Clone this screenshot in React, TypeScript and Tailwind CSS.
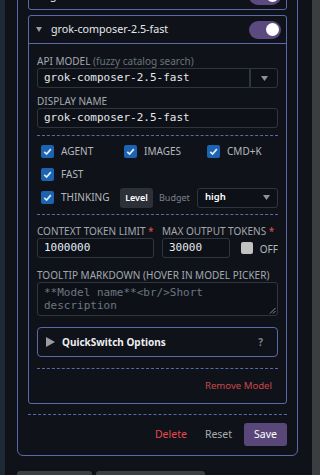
import React from 'react';

const Check: React.FC<{ on?: boolean }> = ({ on = true }) =>
  on ? (
    <span className="w-[13px] h-[13px] rounded-[2px] bg-[#1c63b1] flex items-center justify-center shrink-0">
      <svg width="9" height="9" viewBox="0 0 10 10">
        <path d="M1.4 5.3 L4 7.8 L8.7 2.3" fill="none" stroke="#e3ecf6" strokeWidth="1.9" />
      </svg>
    </span>
  ) : (
    <span className="w-[12px] h-[12px] rounded-[2px] bg-[#c2c2c2] shrink-0" />
  );

const Toggle = () => (
  <div className="w-[32px] h-[18px] rounded-full bg-[#5b4a80] flex items-center justify-end pr-[2px]">
    <div className="w-[13px] h-[13px] rounded-full bg-white" />
  </div>
);

const CardHeader: React.FC<{ title: string; open?: boolean }> = ({ title, open }) => (
  <div className="h-[27px] flex items-center pl-[7px] pr-[5px]">
    {open ? (
      <svg width="6" height="5" viewBox="0 0 6 5" className="shrink-0">
        <path d="M0 0 L6 0 L3 5 Z" fill="#9a9ca0" />
      </svg>
    ) : (
      <svg width="5" height="6" viewBox="0 0 5 6" className="shrink-0">
        <path d="M0 0 L5 3 L0 6 Z" fill="#9a9ca0" />
      </svg>
    )}
    <span className="ml-[9px] text-[10.7px] text-[#e6e8eb] flex-1">{title}</span>
    <Toggle />
  </div>
);

const Label: React.FC<{ children: React.ReactNode; className?: string }> = ({ children, className = '' }) => (
  <div className={`text-[10px] leading-[14px] uppercase text-[#a3a8b0] whitespace-nowrap ${className}`}>{children}</div>
);

const Caret = () => (
  <svg width="7" height="5" viewBox="0 0 7 5">
    <path d="M0 0 L7 0 L3.5 5 Z" fill="#8e9197" />
  </svg>
);

export default function App() {
  return (
    <div className="w-[320px] h-[475px] overflow-hidden flex bg-[#0f1319] font-['Noto_Sans',sans-serif] text-[#e6e8eb]">
      <div className="w-[5px] shrink-0 bg-[#1d2935]" />
      <div className="flex-1 min-w-0 pl-[12px] pr-[14px]">
        {/* Models panel */}
        <div className="-mt-[30px] border border-[#5a6aa8] rounded-[6px] px-[10px] pt-[10px] pb-[9px]">
          <div className="flex flex-col gap-[5px]">
            <div className="border border-[#5a6aa8] rounded-[3px]">
              <CardHeader title="grok-4.2" />
            </div>

            <div className="border border-[#5a6aa8] rounded-[3px]">
              <CardHeader title="grok-composer-2.5-fast" open />
              <div className="border-t border-[#5a6aa8] px-[8px] pt-[10px] pb-[6px]">
                <Label>
                  API Model <span className="normal-case text-[#6b717a]">(fuzzy catalog search)</span>
                </Label>
                <div className="flex h-[20px]">
                  <div className="flex-1 border border-[#30363d] bg-[#0d1117] rounded-l-[3px] px-[6px] flex items-center font-['DejaVu_Sans_Mono',monospace] text-[11px] text-[#e6e8eb]">
                    grok-composer-2.5-fast
                  </div>
                  <div className="w-[28px] border border-[#30363d] bg-[#0d1117] rounded-r-[3px] flex items-center justify-center">
                    <Caret />
                  </div>
                </div>

                <Label className="mt-[6px]">Display Name</Label>
                <div className="h-[20px] border border-[#30363d] bg-[#0d1117] rounded-[3px] px-[6px] flex items-center font-['DejaVu_Sans_Mono',monospace] text-[11px] text-[#e6e8eb]">
                  grok-composer-2.5-fast
                </div>

                <div className="mt-[7px] border-t border-dashed border-[#5a6aa8]" />

                {/* capability flags */}
                <div className="pt-[4px] pb-[5px] text-[10px] text-[#b4b8be]">
                  <div className="h-[23px] grid grid-cols-[83px_83px_1fr] items-center pl-[4px]">
                    <div className="flex items-center gap-[7px]"><Check /> AGENT</div>
                    <div className="flex items-center gap-[7px]"><Check /> IMAGES</div>
                    <div className="flex items-center gap-[7px]"><Check /> CMD+K</div>
                  </div>
                  <div className="h-[23px] flex items-center pl-[4px]">
                    <div className="flex items-center gap-[7px]"><Check /> FAST</div>
                  </div>
                  <div className="h-[23px] flex items-center pl-[4px]">
                    <div className="w-[79px] shrink-0 flex items-center gap-[7px]"><Check /> THINKING</div>
                    <div className="flex h-[20px] text-[9px]">
                      <span className="w-[33px] rounded-[3px] bg-[#2c3038] text-white font-semibold flex items-center justify-center">Level</span>
                      <span className="w-[41px] pl-[6px] text-[#7d828a] flex items-center">Budget</span>
                    </div>
                    <div className="ml-[3px] flex-1 h-[20px] border border-[#30363d] bg-[#0d1117] rounded-[3px] pl-[7px] pr-[7px] flex items-center justify-between text-[9.5px] font-semibold text-white">
                      high
                      <Caret />
                    </div>
                  </div>
                </div>

                <div className="border-t border-dashed border-[#5a6aa8]" />

                {/* token limits */}
                <div className="pt-[9px] flex">
                  <div className="w-[117px] shrink-0">
                    <Label>
                      Context Token Limit <span className="text-[#d9534f]">*</span>
                    </Label>
                    <div className="h-[20px] border border-[#30363d] bg-[#0d1117] rounded-[3px] px-[6px] flex items-center font-['DejaVu_Sans_Mono',monospace] text-[11px] text-[#e6eefa]">
                      1000000
                    </div>
                  </div>
                  <div className="ml-[8px] flex-1 min-w-0">
                    <Label>
                      Max Output Tokens <span className="text-[#d9534f]">*</span>
                    </Label>
                    <div className="flex items-center">
                      <div className="w-[68px] h-[20px] border border-[#30363d] bg-[#0d1117] rounded-[3px] px-[6px] flex items-center font-['DejaVu_Sans_Mono',monospace] text-[11px] text-[#e6e8eb]">
                        30000
                      </div>
                      <div className="ml-[11px] flex items-center gap-[7px]">
                        <Check on={false} />
                        <span className="text-[10px] text-[#b4b8be] mt-[2px]">OFF</span>
                      </div>
                    </div>
                  </div>
                </div>

                <Label className="mt-[10px]">Tooltip Markdown (hover in model picker)</Label>
                <div className="relative h-[34px] border border-[#30363d] bg-[#0d1117] rounded-[3px] px-[6px] pt-[3px] font-['DejaVu_Sans_Mono',monospace] text-[11px] leading-[13px] text-[#6e7681]">
                  **Model name**&lt;br/&gt;Short description
                  <svg width="7" height="7" viewBox="0 0 7 7" className="absolute right-[1px] bottom-[1px]">
                    <path d="M6.5 1 L1 6.5 M6.5 4 L4 6.5" stroke="#8a8d92" strokeWidth="1" />
                  </svg>
                </div>

                {/* QuickSwitch */}
                <div className="mt-[11px] h-[30px] border border-[#5a6aa8] rounded-[4px] pl-[8px] pr-[14px] flex items-center">
                  <svg width="9" height="10" viewBox="0 0 9 10" className="shrink-0">
                    <path d="M0 0 L9 5 L0 10 Z" fill="#9a9ca0" />
                  </svg>
                  <span className="ml-[7px] flex-1 text-[10px] font-bold text-[#eceef1]">QuickSwitch Options</span>
                  <span className="text-[10px] font-bold text-[#7d828a]">?</span>
                </div>

                <div className="mt-[11px] border-t border-dashed border-[#5a6aa8]" />

                <div className="mt-[6px] flex justify-end">
                  <button className="h-[22px] px-[6px] text-[9.6px] text-[#c9474b]">Remove Model</button>
                </div>
              </div>
            </div>
          </div>

          <div className="mt-[10px] border-t border-dashed border-[#5a6aa8]" />

          <div className="mt-[8px] flex justify-end items-center gap-[6px] text-[10.5px]">
            <button className="h-[23px] px-[6px] text-[#e5484d]">Delete</button>
            <button className="h-[23px] px-[6px] text-[#a9abae]">Reset</button>
            <button className="h-[23px] px-[10px] rounded-[3px] bg-[#5a477a] text-white">Save</button>
          </div>
        </div>

        <div className="mt-[15px] flex gap-[4px]">
          <div className="w-[75px] h-[20px] rounded-t-[3px] bg-[#3b3e43]" />
          <div className="w-[109px] h-[20px] rounded-t-[3px] bg-[#3b3e43]" />
        </div>
      </div>
      <div className="w-[8px] shrink-0 bg-[#3b3e40]" />
    </div>
  );
}
